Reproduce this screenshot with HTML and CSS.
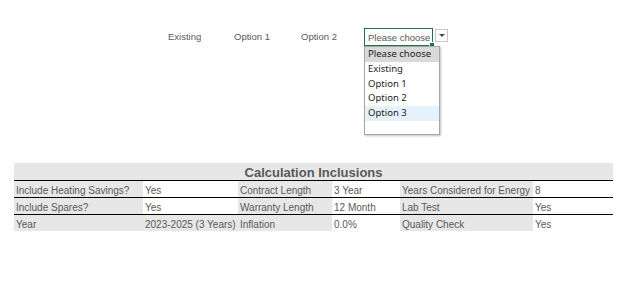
FILE: index.html
```html
<!DOCTYPE html>
<html lang="en">
<head>
    <meta charset="UTF-8">
    <meta name="viewport" content="width=device-width, initial-scale=1.0">
    <title>Calculation Inclusions</title>
    <link rel="stylesheet" href="styles.css">
</head>
<body>
    <div class="options">
        <span class="opt">Existing</span>
        <span class="opt">Option 1</span>
        <span class="opt">Option 2</span>
        <div class="picker">
            <div class="picker-cell">Please choose<span class="handle"></span></div>
            <div class="picker-btn"><span class="caret"></span></div>
            <ul class="picker-list">
                <li class="selected">Please choose</li>
                <li>Existing</li>
                <li>Option 1</li>
                <li>Option 2</li>
                <li class="hover">Option 3</li>
            </ul>
        </div>
    </div>

    <table class="calc">
        <colgroup>
            <col class="c1"><col class="c2"><col class="c3"><col class="c4"><col class="c5"><col class="c6">
        </colgroup>
        <tr class="head">
            <th colspan="6">Calculation Inclusions</th>
        </tr>
        <tr class="line">
            <td class="lbl">Include Heating Savings?</td>
            <td>Yes</td>
            <td class="lbl">Contract Length</td>
            <td>3 Year</td>
            <td class="lbl">Years Considered for Energy</td>
            <td>8</td>
        </tr>
        <tr class="line">
            <td class="lbl">Include Spares?</td>
            <td>Yes</td>
            <td class="lbl">Warranty Length</td>
            <td>12 Month</td>
            <td class="lbl">Lab Test</td>
            <td>Yes</td>
        </tr>
        <tr>
            <td class="lbl">Year</td>
            <td class="lbl">2023-2025 (3 Years)</td>
            <td class="lbl">Inflation</td>
            <td>0.0%</td>
            <td class="lbl">Quality Check</td>
            <td>Yes</td>
        </tr>
    </table>
</body>
</html>
```

FILE: styles.css
```css
body {
    margin: 0;
    padding: 0;
    font-family: "Liberation Sans", Arial, sans-serif;
    color: #595959;
    background-color: #fff;
}
.options {
    display: flex;
    align-items: flex-start;
    padding: 28px 0 0 168px;
    height: 135px;
    box-sizing: border-box;
}
.opt {
    font-size: 9.5px;
    line-height: 18px;
    width: 66px;
}
.opt:nth-child(2) {
    width: 67px;
}
.opt:nth-child(3) {
    width: 63px;
}
.picker {
    position: relative;
    display: flex;
    align-items: flex-start;
}
.picker-cell {
    position: relative;
    width: 69px;
    height: 18px;
    box-sizing: border-box;
    border: 1px solid #217346;
    font-size: 9.5px;
    line-height: 17px;
    padding-left: 3px;
    color: #595959;
}
.handle {
    position: absolute;
    right: -3px;
    bottom: -3px;
    width: 4px;
    height: 4px;
    background-color: #217346;
    border: 1px solid #fff;
}
.picker-btn {
    width: 13px;
    height: 13px;
    margin: 1px 0 0 2px;
    box-sizing: border-box;
    border: 1px solid #c8c8c8;
    background-color: #fff;
    display: flex;
    align-items: center;
    justify-content: center;
}
.caret {
    width: 0;
    height: 0;
    border-left: 3px solid transparent;
    border-right: 3px solid transparent;
    border-top: 3px solid #444;
}
.picker-list {
    position: absolute;
    top: 18px;
    left: 0;
    width: 76px;
    height: 89px;
    box-sizing: border-box;
    margin: 0;
    padding: 0;
    list-style: none;
    background-color: #fff;
    border: 1px solid #a6a6a6;
    box-shadow: 1px 1px 2px rgba(0, 0, 0, 0.25);
    font-family: "Noto Sans", sans-serif;
    font-size: 9.5px;
    color: #222;
}
.picker-list li {
    height: 14.8px;
    line-height: 14.8px;
    padding-left: 3px;
}
.picker-list .selected {
    background-color: #d9d9d9;
}
.picker-list .hover {
    background-color: #e5f1fb;
}
.calc {
    margin: 28px 0 0 14px;
    border-collapse: collapse;
    table-layout: fixed;
    width: 599px;
    font-size: 10px;
}
.c1 { width: 129px; }
.c2 { width: 95px; }
.c3 { width: 94px; }
.c4 { width: 68px; }
.c5 { width: 133px; }
.c6 { width: 80px; }
.calc th {
    background-color: #e7e7e7;
    height: 17px;
    padding: 0;
    font-size: 13px;
    font-weight: bold;
    line-height: 14px;
    vertical-align: bottom;
    text-align: center;
    border-bottom: 1px solid #000;
}
.calc td {
    height: 16px;
    padding: 0 0 0 2px;
    line-height: 12px;
    vertical-align: bottom;
    white-space: nowrap;
    overflow: hidden;
}
.calc .line td {
    border-bottom: 1px solid #000;
}
.calc td.lbl {
    background-color: #e7e7e7;
}
```
